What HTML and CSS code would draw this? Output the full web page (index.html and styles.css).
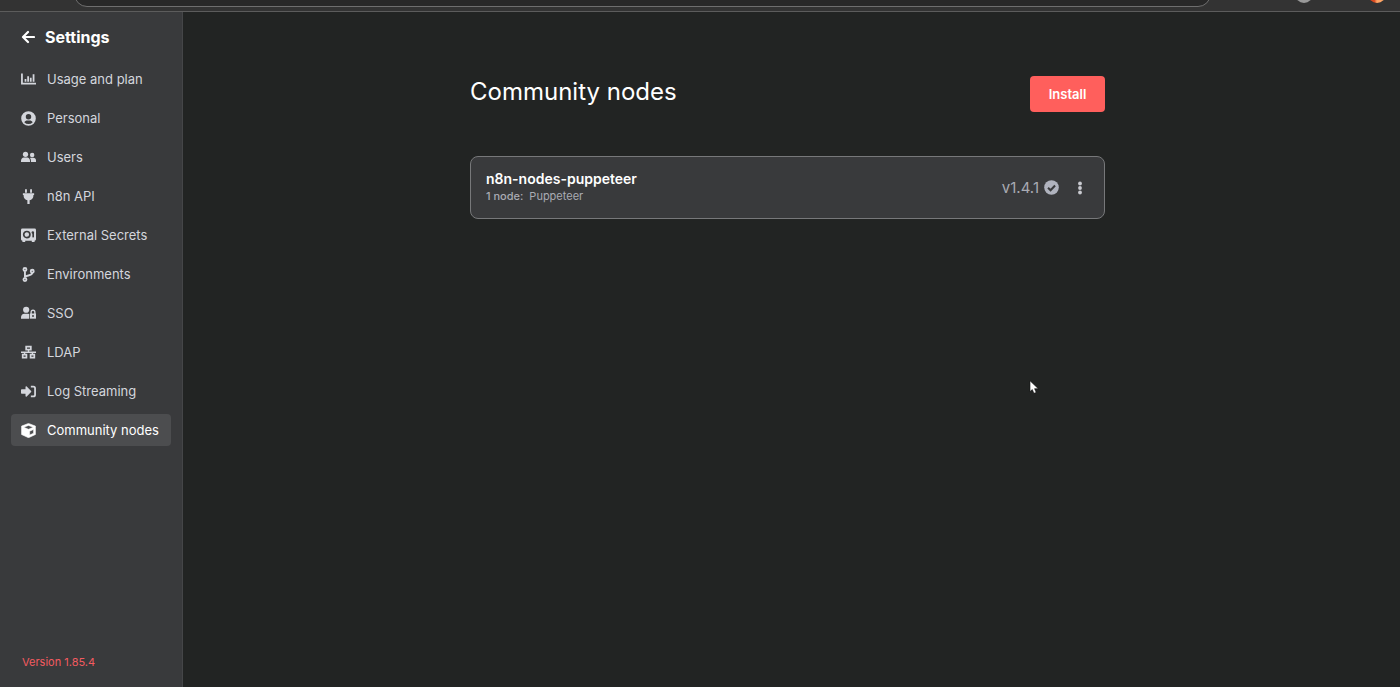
FILE: index.html
```
<!DOCTYPE html>
<html lang="en">
<head>
    <meta charset="UTF-8">
    <meta name="viewport" content="width=device-width, initial-scale=1.0">
    <title>Community nodes</title>
    <link rel="stylesheet" href="styles.css">
</head>
<body>
    <div class="browser-bar">
        <div class="address"></div>
        <div class="extension"></div>
        <div class="avatar"></div>
    </div>

    <div class="layout">
        <nav class="sidebar">
            <a class="back" href="#">
                <svg width="14" height="16" viewBox="0 0 14 16"><path d="M7 3L2 8l5 5M2.500 8H13" fill="none" stroke="currentColor" stroke-width="2.200" stroke-linecap="round" stroke-linejoin="round"/></svg>
                <span>Settings</span>
            </a>

            <ul class="menu">
                <li><a href="#">
                    <svg class="icon" viewBox="0 0 16 16"><path d="M1 1.500V12.500h15" fill="none" stroke="currentColor" stroke-width="1.900"/><path d="M4.800 7.500v3M7.600 4.500v6M10.400 6v4.500M13.400 2.500v8" fill="none" stroke="currentColor" stroke-width="1.900"/></svg>
                    Usage and plan
                </a></li>
                <li><a href="#">
                    <svg class="icon" viewBox="0 0 16 16"><path fill="currentColor" fill-rule="evenodd" d="M8 .2a7.800 7.800 0 1 0 0 15.600A7.800 7.800 0 0 0 8 .2zM8 3.200a2.900 2.900 0 1 1 0 5.800 2.900 2.900 0 0 1 0-5.800zM3.500 11.900C4.300 10.700 5.400 10 6.800 10h2.400c1.400 0 2.500.7 3.300 1.900a6 6 0 0 1-9 0z"/></svg>
                    Personal
                </a></li>
                <li><a href="#">
                    <svg class="icon" viewBox="0 0 16 16"><g fill="currentColor"><circle cx="4.800" cy="4.600" r="2.800"/><path d="M0 12.800v-1.200C0 9.500 1.400 8.100 3 8.100h3.600c1.600 0 3 1.400 3 3.500v1.200z"/><circle cx="11.900" cy="5.200" r="2.400"/><path d="M10.600 12.800v-1.200c0-1.300-.4-2.300-1-3.100.3-.2.800-.2 1.200-.2h2.400c1.600 0 2.800 1.200 2.800 2.900v1.600z"/></g></svg>
                    Users
                </a></li>
                <li><a href="#">
                    <svg class="icon" viewBox="0 0 16 16"><path fill="currentColor" d="M4.300 1a1 1 0 0 1 2 0v3h-2zM9.700 1a1 1 0 0 1 2 0v3h-2zM2 4.500h12v1.900h-.8v1c0 2.200-1.700 4.100-4 4.600V16H6.800v-4C4.500 11.500 2.800 9.600 2.800 7.400v-1H2z"/></svg>
                    n8n API
                </a></li>
                <li><a href="#">
                    <svg class="icon" viewBox="0 0 16 16"><path fill="currentColor" d="M1.500.5h13A1.500 1.500 0 0 1 16 2v10a1.500 1.500 0 0 1-1.500 1.500V15h-3v-1.500h-7V15h-3v-1.500A1.500 1.500 0 0 1 0 12V2A1.500 1.500 0 0 1 1.500.5z"/><circle class="cut-line" cx="6.200" cy="7" r="3.300"/><path class="cut-line" d="M13 4.500v5.500"/><circle class="cut" cx="12.600" cy="4.800" r="1.300"/></svg>
                    External Secrets
                </a></li>
                <li><a href="#">
                    <svg class="icon" viewBox="0 0 16 16"><g fill="none" stroke="currentColor" stroke-width="2"><circle cx="4.200" cy="2.600" r="1.600"/><circle cx="4.200" cy="13.400" r="1.600"/><circle cx="12" cy="4.500" r="1.600"/><path d="M4.200 4.500v7M12 6.200c0 3.800-7.200 2-7.600 4.800"/></g></svg>
                    Environments
                </a></li>
                <li><a href="#">
                    <svg class="icon" viewBox="0 0 16 16"><g fill="currentColor"><circle cx="5.500" cy="4" r="3.300"/><path d="M0 13.500v-1.200C0 9.700 1.500 8.200 3.600 8.200h3.800l1.300.4v4.900z"/><path d="M9.500 8h6.500v5.500H9.500z"/></g><path d="M10.800 8.500V6.500a2 2 0 0 1 4 0v2" fill="none" stroke="currentColor" stroke-width="1.400"/><circle class="cut" cx="12.800" cy="10.700" r="1"/></svg>
                    SSO
                </a></li>
                <li><a href="#">
                    <svg class="icon" viewBox="0 0 16 16"><g fill="none" stroke="currentColor" stroke-width="1.800"><path d="M5.500 1.800h5v3.200h-5zM1.800 10.300h4v3.200h-4zM10.200 10.300h4v3.200h-4z"/><path d="M0 7.700h16M8 5v2.700M3.800 7.700V10M12.200 7.700V10" stroke-width="1.500"/></g></svg>
                    LDAP
                </a></li>
                <li><a href="#">
                    <svg class="icon" viewBox="0 0 16 16"><path fill="currentColor" d="M0 6.300C0 5.800.3 5.500.8 5.500h4V3.200c0-.7.8-1 1.300-.5l4.700 4.700c.3.300.3.800 0 1.100l-4.700 4.800c-.5.500-1.300.1-1.300-.6v-2.200h-4c-.5 0-.8-.3-.8-.8z"/><path d="M10.500 2.800h2.700c1 0 1.800.8 1.800 1.800v6.800c0 1-.8 1.800-1.800 1.800h-2.700" fill="none" stroke="currentColor" stroke-width="1.900"/></svg>
                    Log Streaming
                </a></li>
                <li><a class="active" href="#">
                    <svg class="icon" viewBox="0 0 16 16"><path fill="currentColor" fill-rule="evenodd" stroke="currentColor" stroke-width=".6" stroke-linejoin="round" d="M8 .4l7.400 2.900v9L8 15.700.6 12.300v-9zM8 2.600L2.900 4.500 8 6.700l5.100-2.200zM9.200 8.700v4.200l4.200-2V6.900z"/></svg>
                    Community nodes
                </a></li>
            </ul>

            <a class="version" href="#">Version 1.85.4</a>
        </nav>

        <main class="content">
            <div class="container">
                <div class="heading">
                    <h1>Community nodes</h1>
                    <button class="install" type="button">Install</button>
                </div>

                <div class="card">
                    <div class="card-info">
                        <h2>n8n-nodes-puppeteer</h2>
                        <p><b>1 node:</b>Puppeteer</p>
                    </div>
                    <span class="card-version">v1.4.1</span>
                    <svg class="check" width="15" height="15" viewBox="0 0 16 16"><circle cx="8" cy="8" r="7.800" fill="currentColor"/><path d="M4.300 8.300l2.700 2.600 4.800-5" fill="none" stroke="#393a3c" stroke-width="2.200"/></svg>
                    <button class="dots" type="button" aria-label="Actions">
                        <svg width="6" height="14" viewBox="0 0 6 14" fill="currentColor"><circle cx="3" cy="2.500" r="1.900"/><circle cx="3" cy="7" r="1.900"/><circle cx="3" cy="11.500" r="1.900"/></svg>
                    </button>
                </div>
            </div>
        </main>
    </div>

    <svg class="cursor" width="10" height="14" viewBox="0 0 10 14"><path d="M1 .8v10.800l2.300-2 1.600 3.700 2.300-.9-1.600-3.700h3.700z" fill="#fff" stroke="#111" stroke-width=".6"/></svg>
</body>
</html>
```
FILE: styles.css
```
* {
    box-sizing: border-box;
}

body {
    display: flex;
    flex-direction: column;
    min-height: 100vh;
    margin: 0;
    font-family: Inter, "Liberation Sans", sans-serif;
    font-size: 13px;
    color: #fff;
    background-color: #222423;
}

a {
    color: inherit;
    text-decoration: none;
}

/* Bottom edge of the browser toolbar */
.browser-bar {
    display: flex;
    align-items: flex-start;
    height: 12px;
    padding: 0 14px 0 74px;
    overflow: hidden;
    background-color: #333;
    border-bottom: 1px solid #5c5c5c;
}

.address {
    flex: 1;
    height: 26px;
    margin-top: -19px;
    background-color: #282828;
    border: 1px solid #6e6e6e;
    border-radius: 13px;
}

.extension,
.avatar {
    width: 18px;
    height: 18px;
    margin-top: -15px;
    border-radius: 50%;
}

.extension {
    margin-left: 84px;
    background-color: #999;
}

.avatar {
    margin-left: 55px;
    background: linear-gradient(90deg, #d9481f 35%, #ffa566 50%);
}

.layout {
    display: flex;
    flex: 1;
}

.sidebar {
    display: flex;
    flex-direction: column;
    width: 183px;
    padding: 13px 11px 16px;
    background-color: #393a3c;
    border-right: 1px solid #454648;
}

.back {
    display: flex;
    align-items: center;
    gap: 10px;
    padding-left: 10px;
    font-size: 16px;
    line-height: 24px;
    font-weight: 700;
}

.menu {
    display: flex;
    flex-direction: column;
    gap: 7px;
    flex: 1;
    margin: 0;
    padding: 14px 0 0;
    list-style: none;
}

.menu a {
    display: flex;
    align-items: center;
    gap: 11px;
    height: 32px;
    padding-left: 10px;
    border-radius: 4px;
    color: #d4d6dc;
    white-space: nowrap;
}

.menu a.active {
    color: #fff;
    background-color: #4c4d4f;
}

.icon {
    flex: none;
    width: 15px;
    height: 15px;
}

/* Details cut out of the solid icons */
.cut {
    fill: #393a3c;
}

.cut-line {
    fill: none;
    stroke: #393a3c;
    stroke-width: 1.8;
}

.version {
    padding-left: 11px;
    font-size: 11px;
    line-height: 18px;
    color: #f45b60;
}

.content {
    flex: 1;
    padding: 64px 32px 32px 24px;
}

.container {
    max-width: 635px;
    margin: 0 auto;
}

.heading {
    display: flex;
    justify-content: space-between;
    align-items: flex-start;
    margin-bottom: 44px;
}

h1 {
    margin: 0;
    font-size: 24px;
    line-height: 32px;
    font-weight: 400;
}

.install {
    width: 75px;
    height: 36px;
    padding: 0;
    font-family: inherit;
    font-size: 13px;
    font-weight: 600;
    color: #fff;
    background-color: #ff5f5c;
    border: none;
    border-radius: 4px;
    cursor: pointer;
}

.card {
    display: flex;
    align-items: center;
    padding: 12px 13px 12px 15px;
    background-color: #393a3c;
    border: 1px solid #77787a;
    border-radius: 8px;
}

.card-info {
    flex: 1;
    padding-bottom: 2px;
}

h2 {
    margin: 0;
    font-size: 14px;
    line-height: 20px;
    font-weight: 600;
}

.card p {
    margin: 0;
    font-size: 11px;
    line-height: 15px;
    color: #a9abb3;
}

.card b {
    margin-right: 6px;
    font-weight: 500;
}

.card-version {
    font-size: 15px;
    color: #a9abb3;
}

.check {
    margin-left: 5px;
    color: #b0b3be;
}

.dots {
    display: flex;
    justify-content: center;
    width: 22px;
    margin-left: 10px;
    padding: 0;
    color: #c9cad0;
    background: none;
    border: none;
    cursor: pointer;
}

.cursor {
    position: absolute;
    left: 1029px;
    top: 380px;
}
```
